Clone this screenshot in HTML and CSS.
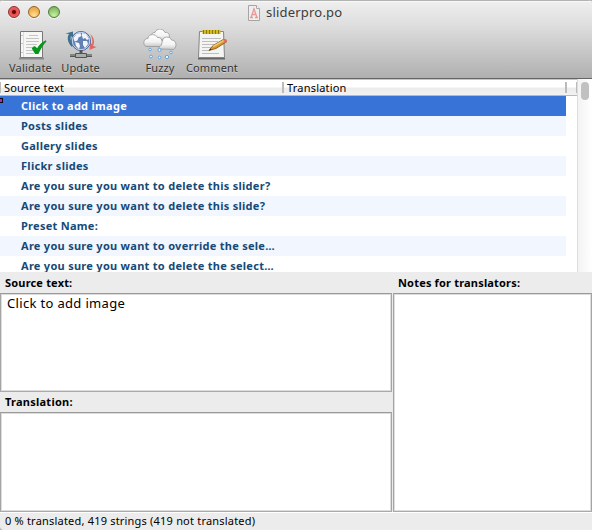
FILE: index.html
```
<!DOCTYPE html>
<html lang="en">
<head>
<meta charset="utf-8">
<title>sliderpro.po</title>
<link rel="stylesheet" href="styles.css">
</head>
<body>
<div class="window">
  <header class="chrome">
    <div class="titlebar">
      <div class="lights"><i class="light red"></i><i class="light amber"></i><i class="light green"></i></div>
      <svg class="doc" width="12" height="16" viewBox="0 0 12 16"><path d="M.5.5h8l3 3v12H.5z" fill="#eee" stroke="#a5a5a5"/><path d="M8.500.5v3h3" fill="#fff" stroke="#aaa"/><path d="M3 12.500L6 4l3 8.500M4 9.500h4M2 12.500h3M7 12.500h3M5 4.500h2" fill="none" stroke="#eb9998" stroke-width="1.300"/></svg>
      <span class="title">sliderpro.po</span>
    </div>
    <nav class="toolbar">
      <div class="tool validate">
        <svg width="34" height="32" viewBox="0 0 34 32"><path d="M5 29.500h25" stroke="#666" stroke-width="2" opacity=".6"/><path d="M6.500 2.500h22v26h-22z" fill="#f6f6f4" stroke="#777"/><path d="M9.500 3v25" stroke="#ddd"/><path d="M8 6v1M8 14v1M8 23v1" stroke="#999"/><path d="M15 6.500h9M12 9.500h13M12 12.500h13M12 15.500h11M12 18.500h10M12 21.500h7M12 24.500h8" stroke="#c4c4c4"/><path d="M18.500 19.500c1.500-2.500 3-2 4.500 1C25.500 16 28 13.500 32 12c-4 4-5.500 7-8 12.500h-2.500z" fill="#07951b" stroke="#07951b" stroke-width="1.200"/></svg>
        <span>Validate</span>
      </div>
      <div class="tool update">
        <svg width="34" height="32" viewBox="0 0 34 32"><path d="M8 18C3 13 3 8 5 5L1.500 4.500 9 2.500v7L7 7C6 10 7 13 9 16z" fill="#3d718e"/><path d="M26 5c4 3 5 8 3 12l3.500 1-7 3 .500-8 2 2.500c1-4 0-7-2-10.500z" fill="#df6661"/><circle cx="17" cy="12" r="9.500" fill="#6280b4" stroke="#49649b"/><circle cx="17" cy="12" r="8.700" fill="none" stroke="#c9d8ed"/><path d="M9.500 9l3-4 4-1 1 3-3 1.500-1 3-3 1zM11 13l4 1 1 3-1 3-3-3zM18 4l4 1 3 5-2 1-2-2-2 1-1-3zM19 12l4 0 1 3-3 4-2-3z" fill="#f0f5fb"/><path d="M17 21v4M6 26.500h22" stroke="#505755" stroke-width="3"/><path d="M6 26h22" stroke="#afb5b2"/><path d="M11.500 24.500h11v4h-11z" fill="#a9adab" stroke="#555"/></svg>
        <span>Update</span>
      </div>
      <div class="tool fuzzy">
        <svg width="34" height="32" viewBox="0 0 34 32"><defs><linearGradient id="cloud" x2="0" y2="1"><stop stop-color="#fff"/><stop offset=".6" stop-color="#f4f4f4"/><stop offset="1" stop-color="#c8c8c8"/></linearGradient></defs><g fill="url(#cloud)" stroke="#989898" stroke-width=".8"><path d="M10 11C6 9 8 3 12 3.500c1-4 8-5 10 0 4-1 6 4 3 7z"/><path d="M17.500 20c-4-2-2-8 2-8 0-5 8-5 9-1 5 0 6 7 2 9.500z"/><path d="M3 17.500c-4-2-2-8.500 2-8 0-5 8-5 9.500-1 5-1 6 6.500 2.500 9z"/></g><g fill="#eaf6ff" stroke="#63a3dc"><circle cx="7" cy="20.500" r="1.300"/><circle cx="16.500" cy="21" r="1.600"/><circle cx="28" cy="23.500" r="1.300"/><circle cx="8" cy="27.500" r="1.400"/><circle cx="16.500" cy="28.500" r="1.300"/><circle cx="24" cy="28" r="1.700"/></g></svg>
        <span>Fuzzy</span>
      </div>
      <div class="tool comment">
        <svg width="34" height="32" viewBox="0 0 34 32"><path d="M3 29.500h27" stroke="#666" stroke-width="2"/><path d="M4.500 2.500h24l1 26h-26z" fill="#f4f4f3" stroke="#858585"/><path d="M7 9.500h19M7 12.500h16M7 15.500h12M7 18.500h9M7 21.500h7M7 24.500h17" stroke="#bdbdbd"/><path d="M7.500 3h18" stroke="#d3bb1e" stroke-width="4"/><path d="M8.500 1v4M11.500 1v4M14.500 1v4M17.500 1v4M20.500 1v4M23.500 1v4" stroke="#8a780c"/><path d="M14 21.500l4-5L29 10l3 2.500-11 7z" fill="#d69831" stroke="#7f521b" stroke-width=".8"/><path d="M17.500 17L29 10.500l1 1L19 18z" fill="#f7cb68"/><path d="M14 21.500l1.500-2 1 1z" fill="#222"/><path d="M28 10.500c2-1.500 5 0 4 2l-2 1.500z" fill="#e76b5e"/></svg>
        <span>Comment</span>
      </div>
    </nav>
  </header>
  <section class="list">
    <div class="table">
      <div class="head"><span class="c1">Source text</span><span class="c2">Translation</span><span class="c3"></span></div>
      <div class="rows">
        <div class="row selected"><i class="mark"></i><span>Click to add image</span></div>
        <div class="row"><span>Posts slides</span></div>
        <div class="row"><span>Gallery slides</span></div>
        <div class="row"><span>Flickr slides</span></div>
        <div class="row"><span>Are you sure you want to delete this slider?</span></div>
        <div class="row"><span>Are you sure you want to delete this slide?</span></div>
        <div class="row"><span>Preset Name:</span></div>
        <div class="row"><span>Are you sure you want to override the sele…</span></div>
        <div class="row"><span>Are you sure you want to delete the select…</span></div>
      </div>
    </div>
    <div class="scroll"><i></i></div>
  </section>
  <section class="editors">
    <div class="left">
      <label>Source text:</label>
      <div class="box source"><span>Click to add image</span></div>
      <label class="second">Translation:</label>
      <div class="box trans"></div>
    </div>
    <div class="right">
      <label>Notes for translators:</label>
      <div class="box notes"></div>
    </div>
  </section>
  <footer><span>0 % translated, 419 strings (419 not translated)</span></footer>
</div>
</body>
</html>
```
FILE: styles.css
```
* { box-sizing: border-box; }
body { margin: 0; overflow: hidden; background: #b4b4b4; font: 11px "Noto Sans", "Open Sans", sans-serif; color: #000; }
.window { width: 592px; height: 530px; display: flex; flex-direction: column; background: #ececec; border-radius: 4px 4px 0 4px; overflow: hidden; white-space: nowrap; }
.chrome { height: 79px; flex: none; border-top: 1px solid #b2b2b2; background: linear-gradient(#efefef, #dedede 24px, #b0b0b0); box-shadow: inset 0 1px #f8f8f8; border-bottom: 1px solid #666; }
.titlebar { height: 24px; display: flex; align-items: center; padding-left: 8px; }
.lights { width: 240px; display: flex; gap: 8px; margin-top: -2px; }
.light { width: 12px; height: 12px; border-radius: 50%; border: 1px solid #775d54; box-shadow: 0 1px #fff9; }
.red { background: radial-gradient(circle at 50% 50%, #650909 0 1.5px, #e64c4c 2.500px, #f07d7d); border-color: #8d2c2b; }
.amber { background: radial-gradient(circle at 50% 85%, #ffe29c, #f0b24c 60%, #dba85d); border-color: #926125; }
.green { background: radial-gradient(circle at 50% 85%, #c7f3a3, #8fc66c 60%, #7ca666); border-color: #4f793b; }
.title { margin-left: 6px; font-size: 13px; color: #3c3c3c; line-height: 16px; margin-top: -2px; letter-spacing: .2px; }
.doc { margin-top: -1px; }
.toolbar { display: flex; padding-top: 4px; color: #333; }
.tool { display: flex; flex-direction: column; align-items: center; line-height: 14px; text-shadow: 0 1px #fff6; letter-spacing: .1px; }
.tool svg { display: block; }
.validate { width: 61px; letter-spacing: .2px; }
.update { width: 39px; }
.fuzzy { margin-left: 40px; width: 40px; }
.comment { margin-left: 6px; width: 52px; }
.list { height: 193px; flex: none; display: flex; background: #fff; }
.table { width: 577px; overflow: hidden; }
.head { height: 17px; display: flex; background: linear-gradient(#fff 0 45%, #ececec 55%, #f2f2f2); border-top: 1px solid #c4c4c4; border-bottom: 1px solid #b9b9b9; letter-spacing: .2px; }
.head span { height: 11px; margin-top: 2px; line-height: 12px; }
.c1 { width: 282px; padding-left: 3px; border-left: 1px solid #bbb; }
.c2 { width: 283px; padding-left: 3px; border-left: 2px solid #bbb; }
.c3 { width: 12px; border-left: 2px solid #bbb; border-right: 1px solid #bbb; }
.row { width: 566px; height: 20px; padding-left: 21px; line-height: 20px; font-weight: 700; color: #164a77; position: relative; letter-spacing: .28px; }
.row:nth-child(even) { background: #f2f6ff; }
.row.selected { background: #3873d8; color: #fff; }
.mark { position: absolute; left: 0; top: 2px; width: 3px; height: 5px; border: solid #100516; border-width: 1px 1px 1px 0; background: #a432a0; }
.scroll { width: 15px; border-left: 1px solid #ddd; background: linear-gradient(90deg, #f3f3f3, #fff); padding: 3px 0 0 3px; }
.scroll i { display: block; width: 8px; height: 18px; border-radius: 4px; background: #c1c1c1; }
.editors { height: 240px; flex: none; display: flex; }
.left { width: 392px; }
.right { width: 199px; margin-left: 1px; }
label { display: block; height: 21px; padding-left: 5px; line-height: 22px; font-weight: 700; letter-spacing: .18px; }
label.second { height: 20px; line-height: 20px; letter-spacing: .25px; }
.box { background: #fff; border: 1px solid; border-color: #999 #a5a5a5 #aaa; box-shadow: inset 0 0 0 1px #ddd; }
.source { height: 99px; padding: 0 6px; font-size: 13px; line-height: 18px; letter-spacing: .33px; }
.trans { height: 100px; }
.notes { height: 219px; }
footer { height: 18px; border-top: 1px solid #fff; padding-left: 5px; line-height: 15px; letter-spacing: .2px; }
```
